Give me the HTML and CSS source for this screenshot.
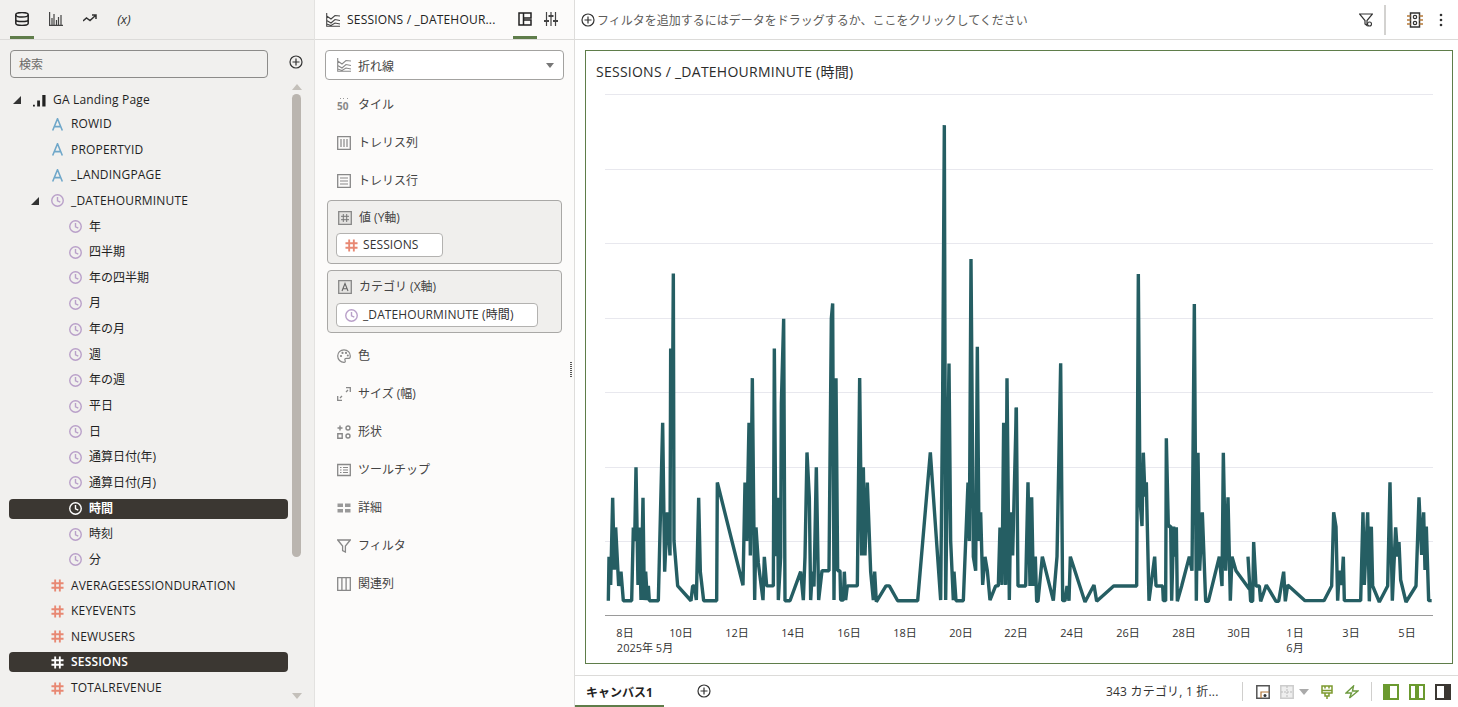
FILE: index.html
```html
<!DOCTYPE html>
<html lang="ja">
<head>
<meta charset="utf-8">
<title>SESSIONS</title>
<link rel="stylesheet" href="styles.css">
</head>
<body>
<svg class="defs" width="0" height="0" aria-hidden="true">
  <symbol id="clock" viewBox="0 0 14 14"><circle cx="7" cy="7" r="6.2" fill="none" stroke="currentColor" stroke-width="1.5"/><path d="M7 3.200V7.300L10 8.800" fill="none" stroke="currentColor" stroke-width="1.500"/></symbol>
  <symbol id="attr" viewBox="0 0 12 14"><path d="M.8 13.500L6 .8L11.200 13.500M2.600 9.300H9.400" fill="none" stroke="currentColor" stroke-width="1.700"/></symbol>
  <symbol id="hash" viewBox="0 0 14 14"><path d="M4.500 .5V13.500M9.500 .5V13.500M.5 4.600H13.500M.5 9.400H13.500" fill="none" stroke="currentColor" stroke-width="2"/></symbol>
  <symbol id="plus" viewBox="0 0 14 14"><circle cx="7" cy="7" r="6" fill="none" stroke="currentColor" stroke-width="1.2"/><path d="M7 3.500V10.500M3.500 7H10.500" stroke="currentColor" stroke-width="1.2"/></symbol>
  <symbol id="line" viewBox="0 0 14 14"><path d="M.7 0V13.300H14M.7 3L5 6L9 2.500L14 3M.7 7.500L5 10L9 6.500L14 7.500M.7 11L5 12.500L9 10L14 11" fill="none" stroke="currentColor" stroke-width="1.100"/></symbol>
</svg>
<div class="app">
  <aside class="data">
    <header class="tabs">
      <span class="tab on"><svg class="ic" viewBox="0 0 14 14"><ellipse cx="7" cy="2.800" rx="6.200" ry="2.300" fill="none" stroke="#222" stroke-width="1.500"/><path d="M.8 2.800V11.200C.8 12.400 3.700 13.400 7 13.400S13.200 12.400 13.200 11.200V2.800M.8 7.400C.8 8.600 3.700 9.600 7 9.600S13.200 8.600 13.200 7.400" fill="none" stroke="#222" stroke-width="1.500"/></svg></span>
      <span class="tab"><svg class="ic" viewBox="0 0 14 14"><path d="M.6 0V13.400H14M3 13V6M5 13V2M7.500 13V8M9.500 13V5M12 13V3" fill="none" stroke="#444" stroke-width="1.200"/></svg></span>
      <span class="tab"><svg class="ic" viewBox="0 0 14 14"><path d="M0 9L3.500 6L7 8.500L12.500 3.500M9 3H13V7" fill="none" stroke="#333" stroke-width="1.500"/></svg></span>
      <span class="tab fx">(x)</span>
    </header>
    <div class="searchbar">
      <div class="search">検索</div>
      <svg class="addbtn"><use href="#plus"/></svg>
    </div>
    <div class="treewrap">
      <div class="tree">
        <div class="row lv0 ga"><i class="tw"></i><svg class="ic13" viewBox="0 0 14 14"><path d="M0 11.500H2V13.500H0ZM4.500 7H7.500V13.500H4.500ZM10 1H13.500V13.500H10Z" fill="#222"/></svg>GA Landing Page</div>
        <div class="row lv1"><svg class="ic13 attr"><use href="#attr"/></svg>ROWID</div>
        <div class="row lv1"><svg class="ic13 attr"><use href="#attr"/></svg>PROPERTYID</div>
        <div class="row lv1"><svg class="ic13 attr"><use href="#attr"/></svg>_LANDINGPAGE</div>
        <div class="row lv1t"><i class="tw"></i><svg class="ic13 time"><use href="#clock"/></svg>_DATEHOURMINUTE</div>
        <div class="row lv2"><svg class="ic13 time"><use href="#clock"/></svg>年</div>
        <div class="row lv2"><svg class="ic13 time"><use href="#clock"/></svg>四半期</div>
        <div class="row lv2"><svg class="ic13 time"><use href="#clock"/></svg>年の四半期</div>
        <div class="row lv2"><svg class="ic13 time"><use href="#clock"/></svg>月</div>
        <div class="row lv2"><svg class="ic13 time"><use href="#clock"/></svg>年の月</div>
        <div class="row lv2"><svg class="ic13 time"><use href="#clock"/></svg>週</div>
        <div class="row lv2"><svg class="ic13 time"><use href="#clock"/></svg>年の週</div>
        <div class="row lv2"><svg class="ic13 time"><use href="#clock"/></svg>平日</div>
        <div class="row lv2"><svg class="ic13 time"><use href="#clock"/></svg>日</div>
        <div class="row lv2"><svg class="ic13 time"><use href="#clock"/></svg>通算日付(年)</div>
        <div class="row lv2"><svg class="ic13 time"><use href="#clock"/></svg>通算日付(月)</div>
        <div class="row lv2 sel"><svg class="ic13"><use href="#clock"/></svg>時間</div>
        <div class="row lv2"><svg class="ic13 time"><use href="#clock"/></svg>時刻</div>
        <div class="row lv2"><svg class="ic13 time"><use href="#clock"/></svg>分</div>
        <div class="row lv1"><svg class="ic13 num"><use href="#hash"/></svg>AVERAGESESSIONDURATION</div>
        <div class="row lv1"><svg class="ic13 num"><use href="#hash"/></svg>KEYEVENTS</div>
        <div class="row lv1"><svg class="ic13 num"><use href="#hash"/></svg>NEWUSERS</div>
        <div class="row lv1 sel"><svg class="ic13"><use href="#hash"/></svg>SESSIONS</div>
        <div class="row lv1"><svg class="ic13 num"><use href="#hash"/></svg>TOTALREVENUE</div>
        <div class="row lv1"><svg class="ic13 num"><use href="#hash"/></svg></div>
      </div>
      <div class="scroll">
        <i class="arrow up"></i>
        <i class="thumb"></i>
        <i class="arrow down"></i>
      </div>
    </div>
  </aside>

  <section class="grammar">
    <header class="ghead">
      <svg class="ic"><use href="#line"/></svg>
      <span class="gtitle">SESSIONS / _DATEHOUR...</span>
      <span class="gtab on"><svg class="ic" viewBox="0 0 14 14"><path d="M1 1H5.500V13H1ZM5.500 1H13V6H5.500ZM5.500 8H13V13H5.500Z" fill="none" stroke="#222" stroke-width="1.500"/></svg></span>
      <span class="gtab"><svg class="ic" viewBox="0 0 14 14"><path d="M2.500 0V14M7 0V14M11.500 0V14" stroke="#444" stroke-width="1.200"/><path d="M0 9H5M4.500 4H9.500M9 9H14" stroke="#444" stroke-width="2"/></svg></span>
    </header>
    <div class="gbody">
      <div class="select"><svg class="ic gic"><use href="#line"/></svg><span class="seltext">折れ線</span><i class="caret"></i></div>
      <div class="slot"><svg class="ic gic vis" viewBox="0 0 14 14"><path d="M3 .5H4M6 .5H7M10 .5H11" stroke="#999" stroke-width="1"/><text x="0" y="11.500" class="tiny">50</text></svg>タイル</div>
      <div class="slot"><svg class="ic gic" viewBox="0 0 14 14"><path d="M.7 .7H13.300V13.300H.7Z" fill="none" stroke="#888" stroke-width="1.300"/><path d="M4 3V11M7 3V11M10 3V11" stroke="#888" stroke-width="1.200"/></svg>トレリス列</div>
      <div class="slot"><svg class="ic gic" viewBox="0 0 14 14"><path d="M.7 .7H13.300V13.300H.7Z" fill="none" stroke="#888" stroke-width="1.300"/><path d="M3 4H11M3 7H11M3 10H11" stroke="#888" stroke-width="1.200"/></svg>トレリス行</div>
      <div class="well">
        <div class="wlabel"><svg class="ic gic" viewBox="0 0 14 14"><path d="M.7 .7H13.300V13.300H.7Z" fill="#e4e3e1" stroke="#888" stroke-width="1.300"/><path d="M5.300 3V11M8.700 3V11M3 5.300H11M3 8.700H11" stroke="#777" stroke-width="1"/></svg>値 (Y軸)</div>
        <div class="pill short"><svg class="ic13 num"><use href="#hash"/></svg>SESSIONS</div>
      </div>
      <div class="well">
        <div class="wlabel"><svg class="ic gic" viewBox="0 0 14 14"><path d="M.7 .7H13.300V13.300H.7Z" fill="#e4e3e1" stroke="#888" stroke-width="1.300"/><path d="M4 11L7 3.500L10 11M5 8.800H9" fill="none" stroke="#666" stroke-width="1.100"/></svg>カテゴリ (X軸)</div>
        <div class="pill long"><svg class="ic13 time"><use href="#clock"/></svg>_DATEHOURMINUTE (時間)</div>
      </div>
      <div class="slot"><svg class="ic gic" viewBox="0 0 14 14"><path d="M7 .8C3.300 .8 .7 3.500 .7 7S3.500 13.300 7 13.300C8.500 13.300 8.500 12 8 11.200S8 9.300 9.500 9.300H12C13 9.300 13.300 8 13.300 7C13.300 3.500 10.700 .8 7 .8Z" fill="none" stroke="#888" stroke-width="1.200"/><circle cx="4" cy="7" r="1.100" fill="#888"/><circle cx="5.500" cy="3.900" r="1.100" fill="#888"/><circle cx="9" cy="3.900" r="1.100" fill="#888"/><circle cx="10.800" cy="6.500" r="1" fill="#888"/></svg>色</div>
      <div class="slot"><svg class="ic gic" viewBox="0 0 14 14"><path d="M9 .7H13.300V5M.7 9V13.300H5M5 9L3 11M9 5L11 3" fill="none" stroke="#888" stroke-width="1.300"/></svg>サイズ (幅)</div>
      <div class="slot"><svg class="ic gic" viewBox="0 0 14 14"><path d="M3 .5V5.500M.5 3H5.500" stroke="#888" stroke-width="1.400"/><circle cx="11" cy="3" r="2" fill="none" stroke="#888" stroke-width="1.400"/><path d="M.8 8.800H5.200V13.200H.8Z" fill="none" stroke="#888" stroke-width="1.400"/><circle cx="11" cy="11" r="2" fill="none" stroke="#888" stroke-width="1.400"/></svg>形状</div>
      <div class="slot"><svg class="ic gic" viewBox="0 0 14 14"><path d="M.7 1.500H13.300V12.500H.7Z" fill="none" stroke="#888" stroke-width="1.300"/><path d="M3 4.500H4.500M6 4.500H11M3 7H4.500M6 7H11M3 9.500H4.500M6 9.500H11" stroke="#888" stroke-width="1.100"/></svg>ツールチップ</div>
      <div class="slot"><svg class="ic gic" viewBox="0 0 14 14"><path d="M.5 2.500H6V6H.5ZM8 2.500H13.500V6H8ZM.5 8H6V11.500H.5ZM8 8H13.500V11.500H8Z" fill="#999"/></svg>詳細</div>
      <div class="slot"><svg class="ic gic" viewBox="0 0 14 14"><path d="M.7 1H13.300L8.400 7V13L5.600 11.500V7Z" fill="none" stroke="#888" stroke-width="1.300"/></svg>フィルタ</div>
      <div class="slot"><svg class="ic gic" viewBox="0 0 14 14"><path d="M.7 .7H13.300V13.300H.7Z" fill="none" stroke="#888" stroke-width="1.300"/><path d="M4.900 1V13M9.100 1V13" stroke="#888" stroke-width="1.300"/></svg>関連列</div>
      <i class="grip"></i>
    </div>
  </section>

  <main class="canvas">
    <header class="filterbar">
      <svg class="fplus"><use href="#plus"/></svg>
      <span class="hint">フィルタを追加するにはデータをドラッグするか、ここをクリックしてください</span>
      <svg class="ic" viewBox="0 0 14 14"><path d="M.5 1H13.500L8 7.500V12.500L6 11V7.500Z" fill="none" stroke="#333" stroke-width="1.200"/><circle cx="10.500" cy="11" r="2" fill="#fff" stroke="#333" stroke-width="1.100"/></svg>
      <i class="vsep"></i>
      <svg class="ic chip" viewBox="0 0 16 16"><path d="M3.500 1H12.500V15H3.500Z" fill="none" stroke="#333" stroke-width="1.500"/><path d="M0 4H3.500M0 8H3.500M0 12H3.500M12.500 4H16M12.500 8H16M12.500 12H16" stroke="#b5793a" stroke-width="1.300"/><circle cx="8" cy="5" r="1.700" fill="none" stroke="#333" stroke-width="1.200"/><circle cx="8" cy="11" r="1.700" fill="none" stroke="#333" stroke-width="1.200"/></svg>
      <svg class="dots" viewBox="0 0 4 14"><circle cx="2" cy="2" r="1.300" fill="#333"/><circle cx="2" cy="7" r="1.300" fill="#333"/><circle cx="2" cy="12" r="1.300" fill="#333"/></svg>
    </header>
    <div class="stage">
      <figure class="viz">
        <figcaption class="viztitle">SESSIONS / _DATEHOURMINUTE (時間)</figcaption>
        <svg class="plot" viewBox="586 90 866 572">
          <g class="grid">
            <path d="M605 94.500H1433M605 169.500H1433M605 243.500H1433M605 318.500H1433M605 392.500H1433M605 467.500H1433M605 541.500H1433"/>
          </g>
          <path class="axis" d="M605 615.500H1433"/>
          <g transform="translate(590 90) scale(.33333 .3378)">
            <polyline class="series" points="55,1512 57,1382 62,1465 68,1207 73,1420 77,1295 86,1468 93,1426 100,1512 125,1512 130,1295 134,1335 138,1117 144,1465 148,1295 153,1510 159,1207 163,1510 167,1426 172,1510 175,1468 178,1512 205,1512 218,985 224,1426 232,1250 240,1378 242,765 247,1000 250,543 252,1335 263,1468 303,1512 308,1468 313,1468 319,1510 326,1207 331,1426 341,1512 380,1512 382,1162 459,1466 465,1162 470,1335 477,985 481,1378 487,853 494,1510 498,1295 505,1400 519,1510 523,1382 530,1468 550,1468 553,765 558,1380 563,1207 565,1510 572,1382 574,930 581,677 585,1512 600,1512 632,1426 640,1510 645,1382 651,1073 658,1207 662,1510 667,1426 672,1470 679,1117 686,1510 696,1423 717,1423 724,677 728,632 732,1510 738,853 743,1423 750,1423 752,1510 760,1510 763,1426 767,1510 772,1468 802,1468 809,853 815,1378 820,1117 825,1378 832,1162 842,1426 850,1510 854,1426 859,1515 888,1468 898,1468 923,1512 983,1512 1021,1073 1052,1510 1058,900 1063,104 1067,1510 1077,810 1082,1335 1090,1510 1092,1426 1098,1512 1120,1512 1134,1162 1138,1335 1143,500 1150,1382 1157,1423 1162,760 1167,1335 1172,1250 1178,1465 1185,1382 1192,1423 1200,1510 1217,1468 1225,1468 1230,1295 1236,1465 1241,985 1247,1465 1251,853 1258,1510 1262,1250 1268,1378 1279,940"/>
          </g>
          <g transform="translate(1010 260) scale(.33333)">
            <polyline class="series" points="19,443 24,978 47,978 54,667 60,978 65,712 70,978 76,890 80,1024 84,1024 97,890 130,1022 141,890 152,310 158,1022 165,1022 171,978 177,1022 181,890 225,1026 252,975 260,1024 311,978 380,978 385,42 390,720 396,798 400,578 405,710 409,667 417,1022 434,890 438,978 458,978 460,1022 467,1022 469,535 475,800 482,798 485,1022 491,800 494,890 499,802 502,1024 515,978 538,890 546,932 553,132 559,1022 564,578 569,932 577,757 587,1024 595,1024 628,890 636,978 640,578 647,932 654,712 661,1022 666,890 678,932 720,990 714,890 722,1024 728,1024 731,846 738,978 748,978 752,1024 769,975 798,1024 806,1024 821,935 826,1024 833,975 885,1022 942,1022 965,978 971,757 978,800 983,1022 988,932 995,975 1000,890 1003,1022 1052,1022 1059,757 1063,975 1073,757 1078,1024 1084,800 1088,978 1108,1026 1133,978 1140,667 1147,1022 1157,802 1163,890 1167,846 1172,960 1188,1026 1218,978 1227,712 1235,885 1241,757 1245,930 1249,800 1256,1022 1265,1022"/>
          </g>
          <g class="ticks">
            <text x="625" y="637">8日</text><text x="681" y="637">10日</text><text x="737" y="637">12日</text><text x="793" y="637">14日</text><text x="849" y="637">16日</text><text x="905" y="637">18日</text><text x="961" y="637">20日</text><text x="1016" y="637">22日</text><text x="1072" y="637">24日</text><text x="1128" y="637">26日</text><text x="1184" y="637">28日</text><text x="1239" y="637">30日</text><text x="1295" y="637">1日</text><text x="1351" y="637">3日</text><text x="1407" y="637">5日</text>
            <text x="645" y="652">2025年 5月</text><text x="1295" y="652">6月</text>
          </g>
        </svg>
      </figure>
    </div>
    <footer class="status">
      <span class="ctab">キャンバス1</span>
      <svg class="cadd"><use href="#plus"/></svg>
      <span class="count">343 カテゴリ, 1 折...</span>
      <i class="ssep"></i>
      <svg class="ic s1" viewBox="0 0 14 14"><path d="M.8 13.200V.8H13.200V13.200Z" fill="none" stroke="#555" stroke-width="1.500"/><path d="M5 13V7H13" fill="none" stroke="#b5793a" stroke-width="1.200"/><circle cx="9" cy="10.500" r="1.500" fill="#333"/></svg>
      <svg class="ic s2" viewBox="0 0 14 14"><path d="M.8 .8H13.200V13.200H.8Z" fill="#eee" stroke="#ccc" stroke-width="1.500"/><path d="M7 1V13M1 7H13" stroke="#bbb" stroke-width="1" stroke-dasharray="2 1"/></svg>
      <i class="scaret"></i>
      <svg class="ic s3" viewBox="0 0 14 14"><path d="M2 1H12V8H2ZM2 5.500H12M5 1V3.500M9 1V3.500M5 8V11H9V8M7 11V14" fill="none" stroke="#7d9a2f" stroke-width="1.500"/></svg>
      <svg class="ic s4" viewBox="0 0 14 14"><path d="M8.500 1L1 8H6.500L4.500 13L13 6H7.500Z" fill="none" stroke="#6d9a3f" stroke-width="1.400"/></svg>
      <i class="ssep s5"></i>
      <span class="pane p1"><i></i></span>
      <span class="pane p2"><i></i></span>
      <span class="pane p3"><i></i></span>
    </footer>
  </main>
</div>
</body>
</html>
```

FILE: styles.css
```css
* { box-sizing: border-box; }
html, body { margin: 0; height: 100%; overflow: hidden; }
body { font: 12px/16px "Open Sans", "Noto Sans CJK JP", sans-serif; color: #222; background: #fff; }
i { display: block; font-style: normal; }
.defs { position: absolute; }
.app { display: flex; width: 1458px; height: 707px; }
.ic { width: 14px; height: 14px; flex: none; display: block; }
.ic13 { width: 13px; height: 13px; flex: none; margin-right: 7px; display: block; }
.time { color: #b9a0c9; }
.attr { color: #6fa7c9; }
.num { color: #e88873; }

/* data panel */
.data { width: 315px; flex: none; background: #f1f0ee; border-right: 1px solid #e3e2e0; display: flex; flex-direction: column; }
.tabs { height: 40px; flex: none; border-bottom: 1px solid #dcdbd9; display: flex; padding-left: 10px; gap: 10px; }
.tab { width: 24px; height: 39px; display: flex; align-items: center; justify-content: center; padding-top: 1px; border-bottom: 3px solid transparent; }
.tab.on { border-bottom-color: #5f7d4a; }
.fx { font: italic 13px/14px "Open Sans", sans-serif; color: #333; }
.searchbar { display: flex; height: 28px; margin: 10px 0 0 10px; flex: none; align-items: center; }
.search { width: 258px; height: 28px; border: 1px solid #8c8b89; border-radius: 4px; padding: 6px 8px 0; color: #6b6a68; }
.addbtn { width: 14px; height: 14px; margin-left: 21px; margin-top: -4px; color: #333; }
.treewrap { display: flex; flex: 1; min-height: 0; overflow: hidden; }
.tree { width: 279px; margin-left: 9px; padding-top: 12px; flex: none; }
.row { display: flex; align-items: center; height: 20px; margin-bottom: 5.65px; white-space: nowrap; border-radius: 4px; color: #1f1f1f; letter-spacing: .18px; }
.ga { margin-bottom: 4px; }
.lv0 { padding-left: 4px; }
.lv1 { padding-left: 42px; }
.lv1t { padding-left: 22px; }
.lv2 { padding-left: 60px; letter-spacing: 0; }
.tw { width: 20px; flex: none; }
.tw::before { content: ""; display: block; width: 0; height: 0; border-style: solid; border-width: 0 0 8px 8px; border-color: transparent transparent #333 transparent; }
.sel { background: #3b3732; color: #fff; font-weight: 600; }
.scroll { width: 9px; margin-left: 4px; position: relative; display: flex; flex-direction: column; align-items: center; }
.thumb { width: 9px; height: 463px; margin-top: 4px; background: #bab5af; border-radius: 5px; flex: none; }
.arrow { width: 0; height: 0; border-style: solid; border-color: transparent; flex: none; }
.arrow.up { border-width: 0 5px 6px; border-bottom-color: #c4c0ba; margin-top: 6px; }
.arrow.down { border-width: 6px 5px 0; border-top-color: #c4c0ba; margin-top: 136px; }

/* grammar panel */
.grammar { width: 260px; flex: none; background: #fcfbfa; border-right: 1px solid #dedddb; display: flex; flex-direction: column; }
.ghead { height: 40px; flex: none; border-bottom: 1px solid #dcdbd9; display: flex; align-items: center; padding-left: 11px; color: #444; }
.gtitle { margin-left: 7px; width: 166px; color: #222; white-space: nowrap; overflow: hidden; letter-spacing: .2px; }
.gtab { width: 24px; height: 39px; display: flex; align-items: center; justify-content: center; padding-top: 1px; border-bottom: 3px solid transparent; margin-right: 2px; }
.gtab.on { border-bottom-color: #5f7d4a; }
.gbody { position: relative; flex: 1; padding: 10px 11px 0 10px; }
.select { height: 30px; width: 239px; border: 1px solid #a3a2a0; border-radius: 4px; background: #fff; display: flex; align-items: center; padding-left: 11px; color: #444; }
.seltext { padding-top: 3px; }
.gic { color: #888; margin-right: 7px; }
.vis { overflow: visible; }
.tiny { font: 700 10px/12px "Open Sans", sans-serif; fill: #888; }
.caret { width: 0; height: 0; margin-left: auto; margin-right: 9px; border-style: solid; border-width: 5px 4.5px 0; border-color: #777 transparent transparent; }
.slot { height: 38px; display: flex; align-items: center; padding-left: 12px; color: #444; }
.select + .slot { margin-top: 6px; }
.well { width: 235px; margin-left: 2px; border: 1px solid #a9a8a6; border-radius: 4px; background: #f0efed; padding: 9px 8px 0; height: 64px; color: #444; }
.well + .well { margin-top: 6px; height: 63px; padding-top: 8px; }
.well + .slot { margin-top: 4px; }
.wlabel { display: flex; align-items: center; height: 16px; padding-left: 2px; }
.wlabel .gic { margin-right: 7px; }
.pill { height: 24px; margin-top: 7px; background: #fff; border: 1px solid #b3b2b0; border-radius: 4px; display: flex; align-items: center; padding-left: 8px; color: #333; white-space: nowrap; letter-spacing: .1px; }
.well + .well .pill { margin-top: 8px; }
.pill .ic13 { margin-right: 5px; }
.short { width: 107px; }
.long { width: 202px; }
.grip { position: absolute; right: 2px; top: 322px; width: 2px; height: 16px; background: repeating-linear-gradient(#555 0 1px, transparent 1px 2px); }

/* canvas */
.canvas { flex: 1; min-width: 0; display: flex; flex-direction: column; }
.filterbar { height: 40px; flex: none; border-bottom: 1px solid #dcdbd9; display: flex; align-items: center; padding-left: 6px; }
.fplus { width: 14px; height: 14px; color: #333; flex: none; }
.hint { margin-left: 2px; padding-top: 2px; color: #5e5d5b; white-space: nowrap; width: 762px; flex: none; }
.vsep { width: 2px; height: 30px; background: #d3d2d0; margin-left: 11px; }
.chip { width: 16px; height: 16px; margin-left: 21px; }
.dots { width: 4px; height: 14px; margin-left: 16px; }
.stage { flex: 1; min-height: 0; padding: 10px 5px 11px 10px; }
.viz { margin: 0; height: 614px; width: 868px; border: 1px solid #5f7d4a; background: #fff; display: flex; flex-direction: column; }
.viztitle { height: 39px; flex: none; padding: 12px 0 0 10px; font-size: 14px; line-height: 18px; color: #2b2b2b; letter-spacing: .25px; }
.plot { width: 866px; height: 572px; display: block; flex: none; }
.grid path { stroke: #e8e8ee; fill: none; }
.axis { stroke: #9a9a9a; fill: none; }
.series { fill: none; stroke: #255e63; stroke-width: 3.4px; vector-effect: non-scaling-stroke; stroke-linejoin: bevel; }
.ticks text { font: 11px "Open Sans", "Noto Sans CJK JP", sans-serif; fill: #333; text-anchor: middle; }

/* status bar */
.status { height: 32px; flex: none; border-top: 1px solid #dcdbd9; display: flex; align-items: center; }
.ctab { width: 89px; height: 31px; padding: 9px 0 0 11px; font-weight: 700; border-bottom: 2px solid #5f7d4a; white-space: nowrap; color: #222; }
.cadd { width: 14px; height: 14px; margin-left: 33px; color: #333; flex: none; margin-top: -1px; }
.count { margin-left: 395px; width: 128px; flex: none; white-space: nowrap; color: #333; margin-top: 1px; letter-spacing: .2px; }
.ssep { width: 1px; height: 19px; background: #d0cfcd; flex: none; margin-top: -1px; margin-left: 8px; }
.s1 { margin-left: 13px; margin-top: 0; }
.s2 { margin-left: 10px; margin-top: 0; }
.scaret { width: 0; height: 0; margin-left: 5px; border-style: solid; border-width: 6px 5px 0; border-color: #aaa transparent transparent; margin-top: 1px; }
.s3 { margin-left: 11px; margin-top: 0; }
.s4 { margin-left: 11px; margin-top: 0; }
.s5 { margin-left: 12px; }
.pane { width: 16px; height: 16px; display: flex; flex: none; margin-top: 0; margin-left: 10px; border: 2px solid; background: #fff; }
.p1 { margin-left: 11px; border-color: #6b9a2f; border-left-width: 7px; }
.p2 { border-color: #6b9a2f; justify-content: center; }
.p2 i { width: 4px; background: #6b9a2f; }
.p3 { border-color: #3b3732; border-right-width: 7px; }
```
